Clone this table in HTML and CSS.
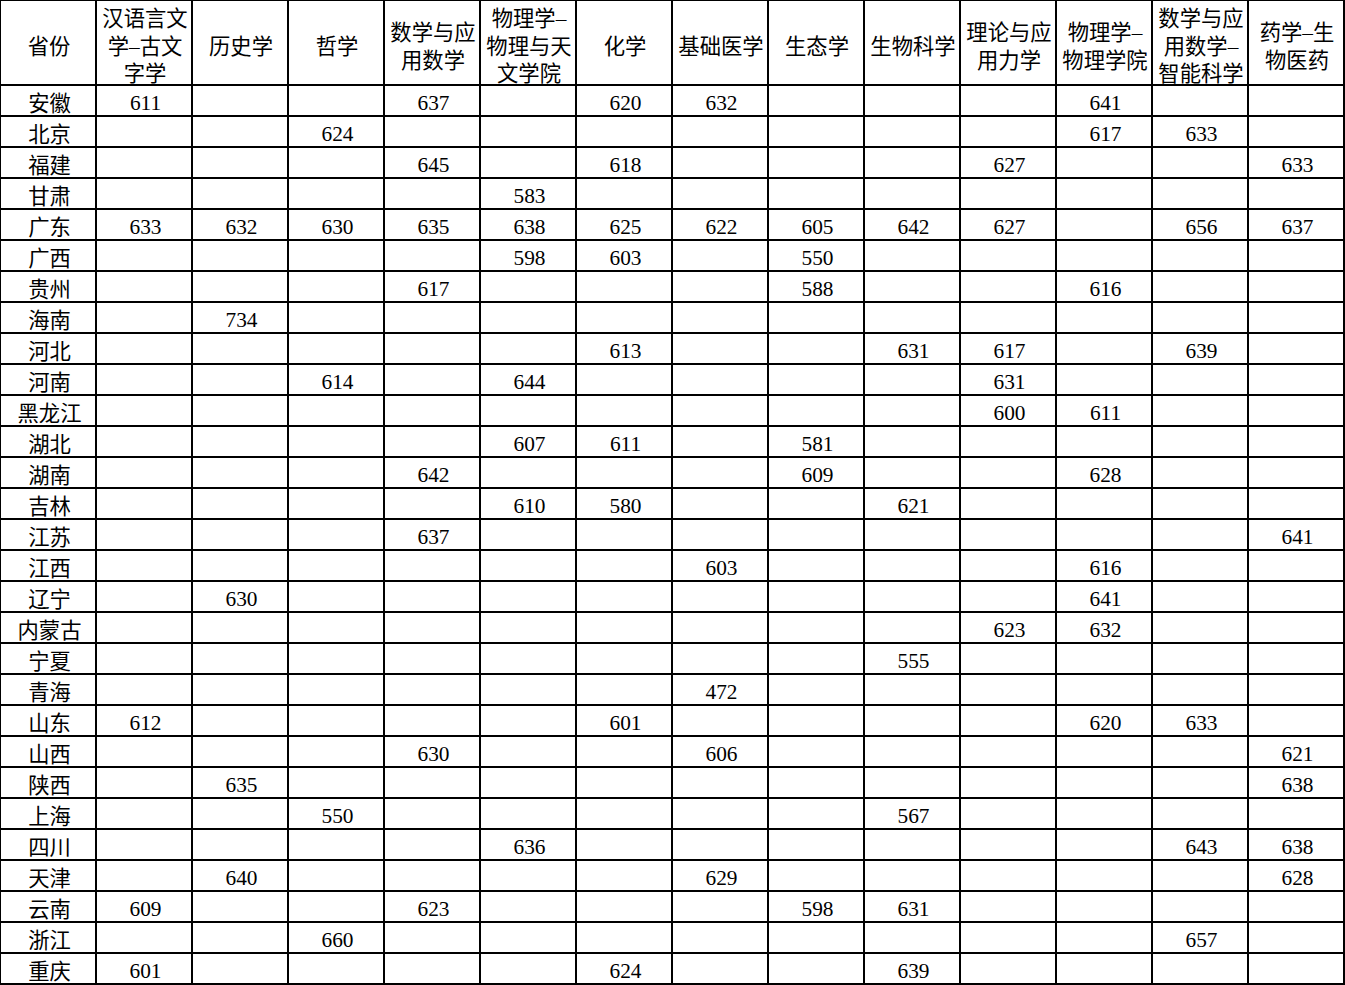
FILE: index.html
```html
<!DOCTYPE html>
<html lang="zh-CN">
<head>
<meta charset="utf-8">
<title>分数表</title>
<link rel="stylesheet" href="styles.css">
</head>
<body>
<table class="grid">
<colgroup>
<col class="c"><col class="c"><col class="c"><col class="c"><col class="c"><col class="c"><col class="c"><col class="c"><col class="c"><col class="c"><col class="c"><col class="c"><col class="c"><col class="c">
</colgroup>
<thead>
<tr>
<th><div class="hd">省份</div></th>
<th><div class="hd">汉语言文<br>学–古文<br>字学</div></th>
<th><div class="hd">历史学</div></th>
<th><div class="hd">哲学</div></th>
<th><div class="hd">数学与应<br>用数学</div></th>
<th><div class="hd">物理学–<br>物理与天<br>文学院</div></th>
<th><div class="hd">化学</div></th>
<th><div class="hd">基础医学</div></th>
<th><div class="hd">生态学</div></th>
<th><div class="hd">生物科学</div></th>
<th><div class="hd">理论与应<br>用力学</div></th>
<th><div class="hd">物理学–<br>物理学院</div></th>
<th><div class="hd">数学与应<br>用数学–<br>智能科学</div></th>
<th><div class="hd">药学–生<br>物医药</div></th>
</tr>
</thead>
<tbody>
<tr><td>安徽</td><td>611</td><td></td><td></td><td>637</td><td></td><td>620</td><td>632</td><td></td><td></td><td></td><td>641</td><td></td><td></td></tr>
<tr><td>北京</td><td></td><td></td><td>624</td><td></td><td></td><td></td><td></td><td></td><td></td><td></td><td>617</td><td>633</td><td></td></tr>
<tr><td>福建</td><td></td><td></td><td></td><td>645</td><td></td><td>618</td><td></td><td></td><td></td><td>627</td><td></td><td></td><td>633</td></tr>
<tr><td>甘肃</td><td></td><td></td><td></td><td></td><td>583</td><td></td><td></td><td></td><td></td><td></td><td></td><td></td><td></td></tr>
<tr><td>广东</td><td>633</td><td>632</td><td>630</td><td>635</td><td>638</td><td>625</td><td>622</td><td>605</td><td>642</td><td>627</td><td></td><td>656</td><td>637</td></tr>
<tr><td>广西</td><td></td><td></td><td></td><td></td><td>598</td><td>603</td><td></td><td>550</td><td></td><td></td><td></td><td></td><td></td></tr>
<tr><td>贵州</td><td></td><td></td><td></td><td>617</td><td></td><td></td><td></td><td>588</td><td></td><td></td><td>616</td><td></td><td></td></tr>
<tr><td>海南</td><td></td><td>734</td><td></td><td></td><td></td><td></td><td></td><td></td><td></td><td></td><td></td><td></td><td></td></tr>
<tr><td>河北</td><td></td><td></td><td></td><td></td><td></td><td>613</td><td></td><td></td><td>631</td><td>617</td><td></td><td>639</td><td></td></tr>
<tr><td>河南</td><td></td><td></td><td>614</td><td></td><td>644</td><td></td><td></td><td></td><td></td><td>631</td><td></td><td></td><td></td></tr>
<tr><td>黑龙江</td><td></td><td></td><td></td><td></td><td></td><td></td><td></td><td></td><td></td><td>600</td><td>611</td><td></td><td></td></tr>
<tr><td>湖北</td><td></td><td></td><td></td><td></td><td>607</td><td>611</td><td></td><td>581</td><td></td><td></td><td></td><td></td><td></td></tr>
<tr><td>湖南</td><td></td><td></td><td></td><td>642</td><td></td><td></td><td></td><td>609</td><td></td><td></td><td>628</td><td></td><td></td></tr>
<tr><td>吉林</td><td></td><td></td><td></td><td></td><td>610</td><td>580</td><td></td><td></td><td>621</td><td></td><td></td><td></td><td></td></tr>
<tr><td>江苏</td><td></td><td></td><td></td><td>637</td><td></td><td></td><td></td><td></td><td></td><td></td><td></td><td></td><td>641</td></tr>
<tr><td>江西</td><td></td><td></td><td></td><td></td><td></td><td></td><td>603</td><td></td><td></td><td></td><td>616</td><td></td><td></td></tr>
<tr><td>辽宁</td><td></td><td>630</td><td></td><td></td><td></td><td></td><td></td><td></td><td></td><td></td><td>641</td><td></td><td></td></tr>
<tr><td>内蒙古</td><td></td><td></td><td></td><td></td><td></td><td></td><td></td><td></td><td></td><td>623</td><td>632</td><td></td><td></td></tr>
<tr><td>宁夏</td><td></td><td></td><td></td><td></td><td></td><td></td><td></td><td></td><td>555</td><td></td><td></td><td></td><td></td></tr>
<tr><td>青海</td><td></td><td></td><td></td><td></td><td></td><td></td><td>472</td><td></td><td></td><td></td><td></td><td></td><td></td></tr>
<tr><td>山东</td><td>612</td><td></td><td></td><td></td><td></td><td>601</td><td></td><td></td><td></td><td></td><td>620</td><td>633</td><td></td></tr>
<tr><td>山西</td><td></td><td></td><td></td><td>630</td><td></td><td></td><td>606</td><td></td><td></td><td></td><td></td><td></td><td>621</td></tr>
<tr><td>陕西</td><td></td><td>635</td><td></td><td></td><td></td><td></td><td></td><td></td><td></td><td></td><td></td><td></td><td>638</td></tr>
<tr><td>上海</td><td></td><td></td><td>550</td><td></td><td></td><td></td><td></td><td></td><td>567</td><td></td><td></td><td></td><td></td></tr>
<tr><td>四川</td><td></td><td></td><td></td><td></td><td>636</td><td></td><td></td><td></td><td></td><td></td><td></td><td>643</td><td>638</td></tr>
<tr><td>天津</td><td></td><td>640</td><td></td><td></td><td></td><td></td><td>629</td><td></td><td></td><td></td><td></td><td></td><td>628</td></tr>
<tr><td>云南</td><td>609</td><td></td><td></td><td>623</td><td></td><td></td><td></td><td>598</td><td>631</td><td></td><td></td><td></td><td></td></tr>
<tr><td>浙江</td><td></td><td></td><td>660</td><td></td><td></td><td></td><td></td><td></td><td></td><td></td><td></td><td>657</td><td></td></tr>
<tr><td>重庆</td><td>601</td><td></td><td></td><td></td><td></td><td>624</td><td></td><td></td><td>639</td><td></td><td></td><td></td><td></td></tr>
</tbody>
</table>
</body>
</html>
```
FILE: styles.css
```css
html, body {
  margin: 0;
  padding: 0;
  background: #ffffff;
}

body {
  font-family: "Liberation Serif", "Noto Sans CJK SC", serif;
  font-size: 21.33px;
  color: #000000;
  overflow: hidden;
}

.grid {
  margin: -1px 0 0 -1px;
  table-layout: fixed;
  width: 1346px;
  border-collapse: separate;
  border-spacing: 2px;
  background: #000000;
}

.grid .c {
  width: 94px;
}

.grid th,
.grid td {
  background: #ffffff;
  padding: 0;
  text-align: center;
  font-weight: normal;
  white-space: nowrap;
  overflow: visible;
}

.grid th {
  height: 83px;
}

.hd {
  height: 83px;
  box-sizing: border-box;
  padding: 10px 0 0 2px;
  display: flex;
  align-items: center;
  justify-content: center;
  line-height: 27.5px;
}

.grid td {
  height: 21px;
  line-height: 21px;
  padding: 7px 0 1px 3px;
  vertical-align: top;
}

.grid td:first-child {
  padding: 8px 0 0 3px;
}
```
